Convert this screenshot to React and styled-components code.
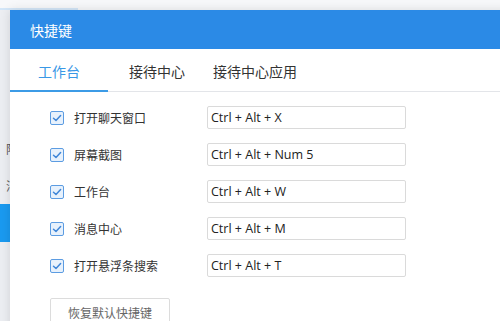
import styled, { createGlobalStyle } from "styled-components";

const GlobalStyle = createGlobalStyle`
  html, body {
    margin: 0;
    padding: 0;
    background: #f6f7f9;
    font-family: "Noto Sans CJK SC", "Noto Sans", sans-serif;
  }
  #root {
    width: 500px;
    height: 321px;
    overflow: hidden;
    position: relative;
  }
`;

const Backdrop = styled.div`
  display: flex;
  flex-direction: column;
  width: 500px;
  height: 321px;
`;

const TopBar = styled.div`
  height: 10px;
  display: flex;
  align-items: flex-end;
  background: #f7f8fa;
`;

const TopMark = styled.div`
  width: 78px;
  height: 2px;
  background: #d3e6f8;
`;

const Body = styled.div`
  flex: 1;
  display: flex;
`;

const Sidebar = styled.div`
  width: 160px;
  background: #eceef2;
  display: flex;
  flex-direction: column;
  padding-top: 120px;
`;

const SideItem = styled.div`
  height: ${(p) => (p.$active ? "38px" : "37px")};
  display: flex;
  align-items: center;
  padding-left: 6px;
  font-size: 12px;
  color: #555;
  background: ${(p) => (p.$active ? "#1a9af0" : "transparent")};
`;

const Dialog = styled.div`
  position: absolute;
  left: 10px;
  top: 10px;
  width: 520px;
  height: 340px;
  background: #fff;
  box-shadow: 0 0 10px rgba(0, 0, 0, 0.12);
  display: flex;
  flex-direction: column;
`;

const Header = styled.div`
  height: 39px;
  background: #2b8ae6;
  display: flex;
  align-items: center;
  padding-left: 20px;
  color: #fff;
  font-size: 14px;
`;

const Tabs = styled.div`
  height: 42px;
  display: flex;
  border-bottom: 1px solid #e3e5e9;
`;

const Tab = styled.div`
  width: 98px;
  display: flex;
  align-items: center;
  justify-content: center;
  font-size: 14px;
  color: ${(p) => (p.$active ? "#3a98e6" : "#333")};
  box-shadow: ${(p) => (p.$active ? "inset 0 -2px 0 #3c9be6" : "none")};
  margin-bottom: -1px;
`;

const Content = styled.div`
  display: flex;
  flex-direction: column;
  padding: 14px 0 0 40px;
  gap: 14px;
`;

const Row = styled.div`
  display: flex;
  align-items: center;
  height: 23px;
`;

const Check = styled.span`
  width: 12px;
  height: 12px;
  border: 1px solid #5c9ce2;
  border-radius: 2px;
  background: #e7f1fc;
  display: flex;
  align-items: center;
  justify-content: center;
`;

const Label = styled.span`
  width: 133px;
  margin-left: 10px;
  font-size: 12px;
  color: #333;
`;

const KeyInput = styled.div`
  width: 194px;
  height: 21px;
  border: 1px solid #dadada;
  border-radius: 2px;
  padding-left: 3px;
  display: flex;
  align-items: center;
  font-family: "Open Sans", "Noto Sans", sans-serif;
  font-size: 12.5px;
  color: #222;
`;

const ResetButton = styled.div`
  margin-top: 7px;
  width: 118px;
  height: 26px;
  border: 1px solid #dcdcdc;
  border-radius: 2px;
  display: flex;
  align-items: center;
  justify-content: center;
  font-size: 12px;
  color: #666;
`;

const shortcuts = [
  { label: "打开聊天窗口", keys: "Ctrl + Alt + X" },
  { label: "屏幕截图", keys: "Ctrl + Alt + Num 5" },
  { label: "工作台", keys: "Ctrl + Alt + W" },
  { label: "消息中心", keys: "Ctrl + Alt + M" },
  { label: "打开悬浮条搜索", keys: "Ctrl + Alt + T" },
];

function CheckMark() {
  return (
    <svg width="10" height="10" viewBox="0 0 10 10">
      <polyline
        points="1.5,5.2 4,7.5 8.6,2.6"
        fill="none"
        stroke="#3f86d8"
        strokeWidth="1.5"
        strokeLinecap="round"
        strokeLinejoin="round"
      />
    </svg>
  );
}

export default function App() {
  return (
    <>
      <GlobalStyle />
      <Backdrop>
        <TopBar>
          <TopMark />
        </TopBar>
        <Body>
          <Sidebar>
            <SideItem>阿里</SideItem>
            <SideItem>消息</SideItem>
            <SideItem $active />
          </Sidebar>
        </Body>
      </Backdrop>
      <Dialog>
        <Header>快捷键</Header>
        <Tabs>
          <Tab $active>工作台</Tab>
          <Tab>接待中心</Tab>
          <Tab>接待中心应用</Tab>
        </Tabs>
        <Content>
          {shortcuts.map((s) => (
            <Row key={s.label}>
              <Check>
                <CheckMark />
              </Check>
              <Label>{s.label}</Label>
              <KeyInput>{s.keys}</KeyInput>
            </Row>
          ))}
          <ResetButton>恢复默认快捷键</ResetButton>
        </Content>
      </Dialog>
    </>
  );
}
